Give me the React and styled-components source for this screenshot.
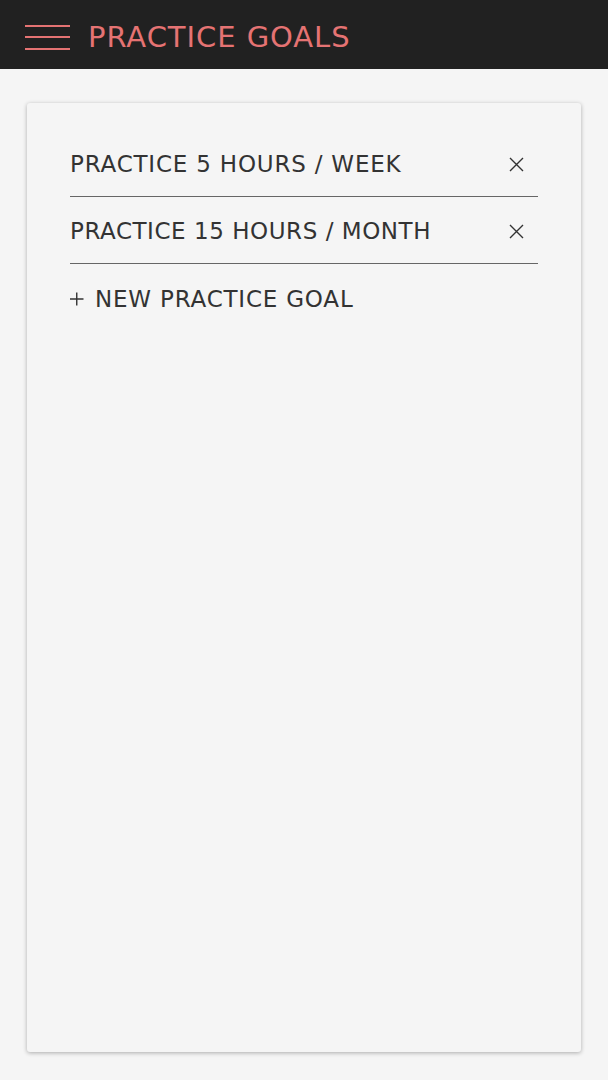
import React from "react";
import styled, { createGlobalStyle } from "styled-components";

const Global = createGlobalStyle`
  html, body { margin: 0; padding: 0; background: #f5f5f5; }
  body { font-family: "DejaVu Sans", "Noto Sans", sans-serif; }
  * { box-sizing: border-box; }
`;

const Page = styled.div`
  display: flex;
  flex-direction: column;
  min-height: 1080px;
  background: #f5f5f5;
`;

const Header = styled.header`
  height: 69px;
  background: #212121;
  display: flex;
  align-items: center;
  padding: 5px 0 0 25px;
  gap: 18px;
`;

const Burger = styled.div`
  width: 45px;
  display: flex;
  flex-direction: column;
  gap: 9.5px;
  span {
    display: block;
    height: 2px;
    background: #e57373;
  }
`;

const Title = styled.h1`
  margin: 0;
  font-size: 29px;
  font-weight: 400;
  color: #e57373;
  letter-spacing: 0.95px;
  line-height: 1;
`;

const Main = styled.main`
  padding: 34px 27px 28px 27px;
  display: flex;
  flex: 1;
`;

const Card = styled.section`
  flex: 1;
  height: 949px;
  background: #f5f5f5;
  border-radius: 3px;
  box-shadow: 0 1px 4px rgba(0, 0, 0, 0.3);
  padding: 27px 43px;
  display: flex;
  flex-direction: column;
`;

const Row = styled.div`
  height: 67px;
  padding-top: 3px;
  display: flex;
  align-items: center;
  justify-content: space-between;
  border-bottom: ${(p) => (p.$divider ? "1px solid #666" : "none")};
  color: #333;
  font-size: 23px;
`;

const Label = styled.span`
  line-height: 1;
  letter-spacing: ${(p) => p.$spacing || "0.8px"};
`;

const IconButton = styled.button`
  border: 0;
  background: none;
  padding: 0;
  margin-right: 14px;
  display: flex;
  cursor: pointer;
`;

const AddRow = styled(Row)`
  justify-content: flex-start;
  gap: 11px;
`;

const Close = () => (
  <svg width="15" height="15" viewBox="0 0 15 15">
    <path d="M1 1 L14 14 M14 1 L1 14" stroke="#333" strokeWidth="1.4" fill="none" />
  </svg>
);

const Plus = () => (
  <svg width="14" height="14" viewBox="0 0 14 14">
    <path d="M0 7 H13.5 M6.75 0.5 V13.5" stroke="#333" strokeWidth="1.4" fill="none" />
  </svg>
);

const goals = [
  { text: "PRACTICE 5 HOURS / WEEK", spacing: "0.8px" },
  { text: "PRACTICE 15 HOURS / MONTH", spacing: "0.55px" },
];

export default function App() {
  return (
    <>
      <Global />
      <Page>
        <Header>
          <Burger>
            <span />
            <span />
            <span />
          </Burger>
          <Title>PRACTICE GOALS</Title>
        </Header>
        <Main>
          <Card>
            {goals.map((g) => (
              <Row key={g.text} $divider>
                <Label $spacing={g.spacing}>{g.text}</Label>
                <IconButton aria-label="remove">
                  <Close />
                </IconButton>
              </Row>
            ))}
            <AddRow>
              <Plus />
              <Label>NEW PRACTICE GOAL</Label>
            </AddRow>
          </Card>
        </Main>
      </Page>
    </>
  );
}
